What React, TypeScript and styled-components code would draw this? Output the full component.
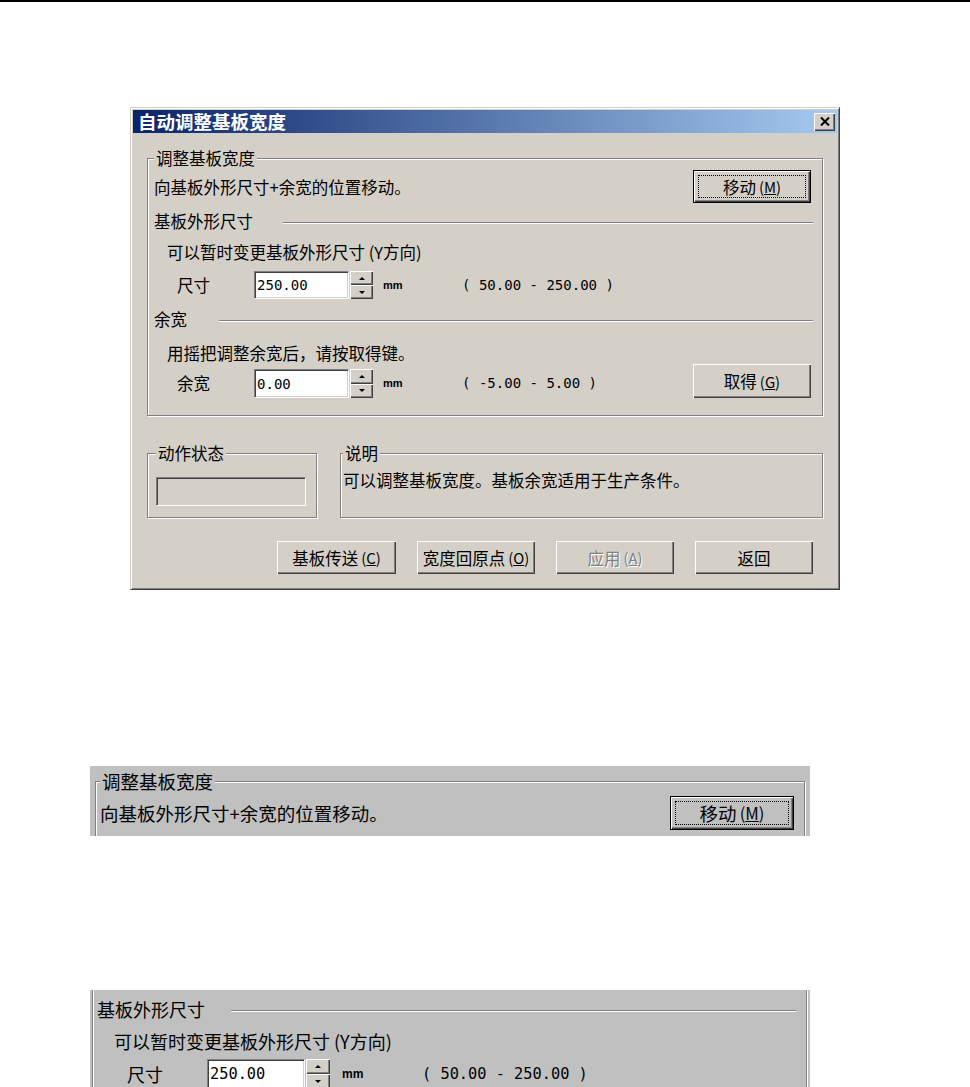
import React from 'react';
import styled, { createGlobalStyle } from 'styled-components';

const FACE = '#D4D0C8';
const SHADOW = '#808080';
const DARK = '#404040';
const SNIP_BG = '#C0C0C0';
const CJK = `"Noto Sans CJK SC", "DejaVu Sans", sans-serif`;
const MONO = `"DejaVu Sans Mono", "Liberation Mono", monospace`;

const GlobalStyle = createGlobalStyle`
  html, body { margin: 0; padding: 0; background: #fff; overflow: hidden; }
  body { font-family: ${CJK}; font-size: 16.5px; color: #000; }
`;

const Page = styled.div`
  display: flex;
  flex-direction: column;
  width: 970px;
  height: 1087px;
`;

const TopRule = styled.div`
  flex: none;
  height: 2px;
  background: #000;
`;

const Window = styled.div`
  flex: none;
  margin: 105px 0 0 130px;
  width: 710px;
  height: 483px;
  box-sizing: border-box;
  padding: 2px;
  background: ${FACE};
  border: 1px solid;
  border-color: ${FACE} ${DARK} ${DARK} ${FACE};
  box-shadow: inset 1px 1px 0 #fff, inset -1px -1px 0 ${SHADOW};
  display: flex;
  flex-direction: column;
`;

const TitleBar = styled.div`
  flex: none;
  height: 23px;
  display: flex;
  align-items: center;
  justify-content: space-between;
  padding: 0 2px 0 5px;
  background: linear-gradient(to right, #0a246a, #a6caf0);
`;

const TitleText = styled.span`
  color: #fff;
  font-weight: 700;
  font-size: 18.5px;
  line-height: 23px;
`;

const CloseBox = styled.div`
  width: 21px;
  height: 18px;
  box-sizing: border-box;
  background: ${FACE};
  display: flex;
  align-items: center;
  justify-content: center;
  box-shadow: inset 1px 1px 0 #fff, inset -1px -1px 0 ${DARK}, inset -2px -2px 0 ${SHADOW};
`;

const Client = styled.div`
  flex: 1;
  display: flex;
  flex-direction: column;
  padding: 15px 14px 0 14px;
`;

const GroupBox = styled.fieldset<{ $bg?: string; $padL?: number; $padR?: number; $padB?: number }>`
  box-sizing: border-box;
  margin: 0;
  min-width: 0;
  padding: 0 ${p => p.$padR ?? 11}px ${p => p.$padB ?? 17}px ${p => p.$padL ?? 6}px;
  background: ${p => p.$bg ?? FACE};
  border: 1px solid ${SHADOW};
  box-shadow: inset 1px 1px 0 #fff, 1px 1px 0 #fff;
  display: flex;
  flex-direction: column;
`;

const StatusGroup = styled(GroupBox)`
  flex: none;
  width: 170px;
`;

const DescGroup = styled(GroupBox)`
  flex: 1;
`;

const Legend = styled.legend`
  padding: 0 2px;
  line-height: 20px;
  background: inherit;
`;

const Line = styled.div<{ $indent?: number; $mt?: number }>`
  line-height: 20px;
  white-space: nowrap;
  padding-left: ${p => p.$indent ?? 0}px;
  margin-top: ${p => p.$mt ?? 0}px;
`;

const SpreadRow = styled.div<{ $mt: number }>`
  display: flex;
  align-items: center;
  justify-content: space-between;
  margin-top: ${p => p.$mt}px;
`;

const SubHead = styled.div<{ $mt?: number }>`
  display: flex;
  align-items: center;
  line-height: 20px;
  margin-top: ${p => p.$mt ?? 0}px;
`;

const Rule = styled.div<{ $gap: number }>`
  flex: 1;
  margin: 3px -2px 0 ${p => p.$gap}px;
  border-top: 1px solid ${SHADOW};
  border-bottom: 1px solid #fff;
`;

const FieldRow = styled.div<{ $indent: number; $mt: number }>`
  display: flex;
  align-items: flex-end;
  padding-left: ${p => p.$indent}px;
  margin-top: ${p => p.$mt}px;
`;

const FieldLabel = styled.span<{ $w: number; $h: number }>`
  flex: none;
  width: ${p => p.$w}px;
  line-height: ${p => p.$h}px;
`;

const Field = styled.input<{ $w: number; $h: number }>`
  flex: none;
  width: ${p => p.$w}px;
  height: ${p => p.$h}px;
  box-sizing: border-box;
  margin: 0;
  padding: 0 0 0 2px;
  background: #fff;
  border: 1px solid;
  border-color: ${SHADOW} #fff #fff ${SHADOW};
  box-shadow: inset 1px 1px 0 ${DARK}, inset -1px -1px 0 ${FACE};
  font-family: ${MONO};
  font-size: 0.85em;
  color: #000;
  outline: none;
`;

const Spin = styled.div<{ $w: number; $h: number }>`
  flex: none;
  width: ${p => p.$w}px;
  height: ${p => p.$h}px;
  margin-left: 1px;
  display: flex;
  flex-direction: column;
`;

const SpinBtn = styled.div`
  flex: 1;
  display: flex;
  align-items: center;
  justify-content: center;
  background: ${FACE};
  box-shadow: inset 1px 1px 0 #fff, inset -1px -1px 0 ${DARK}, inset -2px -2px 0 ${SHADOW};
`;

const Arrow = styled.span<{ $up?: boolean }>`
  width: 0;
  height: 0;
  border-left: 3px solid transparent;
  border-right: 3px solid transparent;
  ${p => (p.$up ? 'border-bottom: 3px solid #000;' : 'border-top: 3px solid #000;')}
`;

const Unit = styled.span<{ $w: number; $h: number; $ml: number }>`
  flex: none;
  width: ${p => p.$w}px;
  margin-left: ${p => p.$ml}px;
  line-height: ${p => p.$h}px;
  font-family: "Liberation Sans", Arial, sans-serif;
  font-size: 0.67em;
  font-weight: 700;
`;

const RangeText = styled.span<{ $h: number }>`
  line-height: ${p => p.$h}px;
  font-family: ${MONO};
  font-size: 0.85em;
  white-space: pre;
`;

const Btn = styled.button<{ $def?: boolean; $push?: boolean; $bg?: string; $w: number; $h: number }>`
  flex: none;
  width: ${p => p.$w}px;
  height: ${p => p.$h}px;
  box-sizing: border-box;
  margin: 0 0 0 ${p => (p.$push ? 'auto' : '0')};
  padding: 0;
  display: flex;
  align-items: stretch;
  background: ${p => p.$bg ?? FACE};
  border: ${p => (p.$def ? '1px solid #000' : 'none')};
  box-shadow: inset 1px 1px 0 #fff, inset -1px -1px 0 ${DARK}, inset -2px -2px 0 ${SHADOW};
  font-family: ${CJK};
  font-size: inherit;
  color: #000;
  &:disabled {
    color: ${SHADOW};
    text-shadow: 1px 1px 0 #fff;
  }
`;

const BtnFace = styled.span<{ $focus?: boolean }>`
  flex: 1;
  margin: 4px;
  display: flex;
  align-items: center;
  justify-content: center;
  white-space: nowrap;
  border: 1px dotted ${p => (p.$focus ? '#000' : 'transparent')};
`;

const Key = styled.span`
  margin-left: 3px;
  font-size: 0.9em;
`;

const LowerRow = styled.div`
  display: flex;
  gap: 23px;
  margin-top: 27px;
`;

const StatusBox = styled.div`
  height: 29px;
  margin-top: 14px;
  box-sizing: border-box;
  border: 1px solid;
  border-color: ${SHADOW} #fff #fff ${SHADOW};
  box-shadow: inset 1px 1px 0 ${DARK}, inset -1px -1px 0 ${FACE};
`;

const ButtonBar = styled.div`
  display: flex;
  justify-content: flex-end;
  gap: 21px;
  margin: 23px 10px 0 0;
`;

const Snip = styled.div<{ $mt: number; $h: number; $pt: number; $size: number }>`
  flex: none;
  margin: ${p => p.$mt}px 0 0 90px;
  width: 720px;
  height: ${p => p.$h}px;
  padding-top: ${p => p.$pt}px;
  box-sizing: border-box;
  overflow: hidden;
  background: ${SNIP_BG};
  font-size: ${p => p.$size}px;
  display: flex;
  flex-direction: column;
`;

const SnipGroup = styled(GroupBox)`
  margin: 0 5px 0 5px;
`;

const SideSlice = styled.div`
  flex: 1;
  margin: 0 3px 0 2px;
  padding: 9px 12px 0 4px;
  border-left: 1px solid ${SHADOW};
  border-right: 1px solid ${SHADOW};
  box-shadow: inset 1px 0 0 #fff, 1px 0 0 #fff;
`;

type Geometry = { indent: number; mt: number; lw: number; fw: number; h: number; sw: number; uml: number; uw: number };

type SpinProps = { value: string; label: string; range: string; g: Geometry; children?: React.ReactNode };

const SpinField: React.FC<SpinProps> = ({ value, label, range, g, children }) => (
  <FieldRow $indent={g.indent} $mt={g.mt}>
    <FieldLabel $w={g.lw} $h={g.h}>{label}</FieldLabel>
    <Field $w={g.fw} $h={g.h} defaultValue={value} readOnly />
    <Spin $w={g.sw} $h={g.h}>
      <SpinBtn><Arrow $up /></SpinBtn>
      <SpinBtn><Arrow /></SpinBtn>
    </Spin>
    <Unit $w={g.uw} $h={g.h} $ml={g.uml}>mm</Unit>
    <RangeText $h={g.h}>{range}</RangeText>
    {children}
  </FieldRow>
);

const dlgGeo: Geometry = { indent: 23, mt: 9, lw: 77, fw: 95, h: 28, sw: 23, uml: 10, uw: 79 };
const snipGeo: Geometry = { indent: 30, mt: 8, lw: 80, fw: 98, h: 30, sw: 24, uml: 12, uw: 80 };

export default function App() {
  return (
    <Page>
      <GlobalStyle />
      <TopRule />

      <Window>
        <TitleBar>
          <TitleText>自动调整基板宽度</TitleText>
          <CloseBox>
            <svg width="10" height="9" viewBox="0 0 10 9">
              <path d="M1 0.5 L9 8.5 M9 0.5 L1 8.5" stroke="#000" strokeWidth="2" fill="none" />
            </svg>
          </CloseBox>
        </TitleBar>

        <Client>
          <GroupBox>
            <Legend>调整基板宽度</Legend>
            <SpreadRow $mt={2}>
              <span>向基板外形尺寸+余宽的位置移动。</span>
              <Btn $def $w={118} $h={33}>
                <BtnFace $focus>移动<Key>(<u>M</u>)</Key></BtnFace>
              </Btn>
            </SpreadRow>

            <SubHead $mt={8}>
              基板外形尺寸
              <Rule $gap={30} />
            </SubHead>
            <Line $indent={13} $mt={11}>可以暂时变更基板外形尺寸 (Y方向)</Line>
            <SpinField value="250.00" label="尺寸" range="( 50.00 - 250.00 )" g={dlgGeo} />

            <SubHead $mt={10}>
              余宽
              <Rule $gap={32} />
            </SubHead>
            <Line $indent={13} $mt={14}>用摇把调整余宽后，请按取得键。</Line>
            <SpinField value="0.00" label="余宽" range="( -5.00 - 5.00 )" g={{ ...dlgGeo, mt: 1, h: 29 }}>
              <Btn $push $w={118} $h={34}>
                <BtnFace>取得<Key>(<u>G</u>)</Key></BtnFace>
              </Btn>
            </SpinField>
          </GroupBox>

          <LowerRow>
            <StatusGroup $padL={8} $padR={10} $padB={11}>
              <Legend>动作状态</Legend>
              <StatusBox />
            </StatusGroup>
            <DescGroup $padL={2} $padB={27}>
              <Legend>说明</Legend>
              <Line $mt={7}>可以调整基板宽度。基板余宽适用于生产条件。</Line>
            </DescGroup>
          </LowerRow>

          <ButtonBar>
            <Btn $w={119} $h={33}>
              <BtnFace>基板传送<Key>(<u>C</u>)</Key></BtnFace>
            </Btn>
            <Btn $w={118} $h={33}>
              <BtnFace>宽度回原点<Key>(<u>O</u>)</Key></BtnFace>
            </Btn>
            <Btn $w={118} $h={33} disabled>
              <BtnFace>应用<Key>(<u>A</u>)</Key></BtnFace>
            </Btn>
            <Btn $w={118} $h={33}>
              <BtnFace>返回</BtnFace>
            </Btn>
          </ButtonBar>
        </Client>
      </Window>

      <Snip $mt={176} $h={70} $pt={5} $size={18.5}>
        <SnipGroup $bg={SNIP_BG} $padL={4} $padR={10}>
          <Legend>调整基板宽度</Legend>
          <SpreadRow $mt={5}>
            <span>向基板外形尺寸+余宽的位置移动。</span>
            <Btn $def $bg={SNIP_BG} $w={124} $h={34}>
              <BtnFace $focus>移动<Key>(<u>M</u>)</Key></BtnFace>
            </Btn>
          </SpreadRow>
        </SnipGroup>
      </Snip>

      <Snip $mt={154} $h={97} $pt={0} $size={18}>
        <SideSlice>
          <SubHead>
            基板外形尺寸
            <Rule $gap={26} />
          </SubHead>
          <Line $indent={17} $mt={12}>可以暂时变更基板外形尺寸 (Y方向)</Line>
          <SpinField value="250.00" label="尺寸" range="( 50.00 - 250.00 )" g={snipGeo} />
        </SideSlice>
      </Snip>
    </Page>
  );
}
